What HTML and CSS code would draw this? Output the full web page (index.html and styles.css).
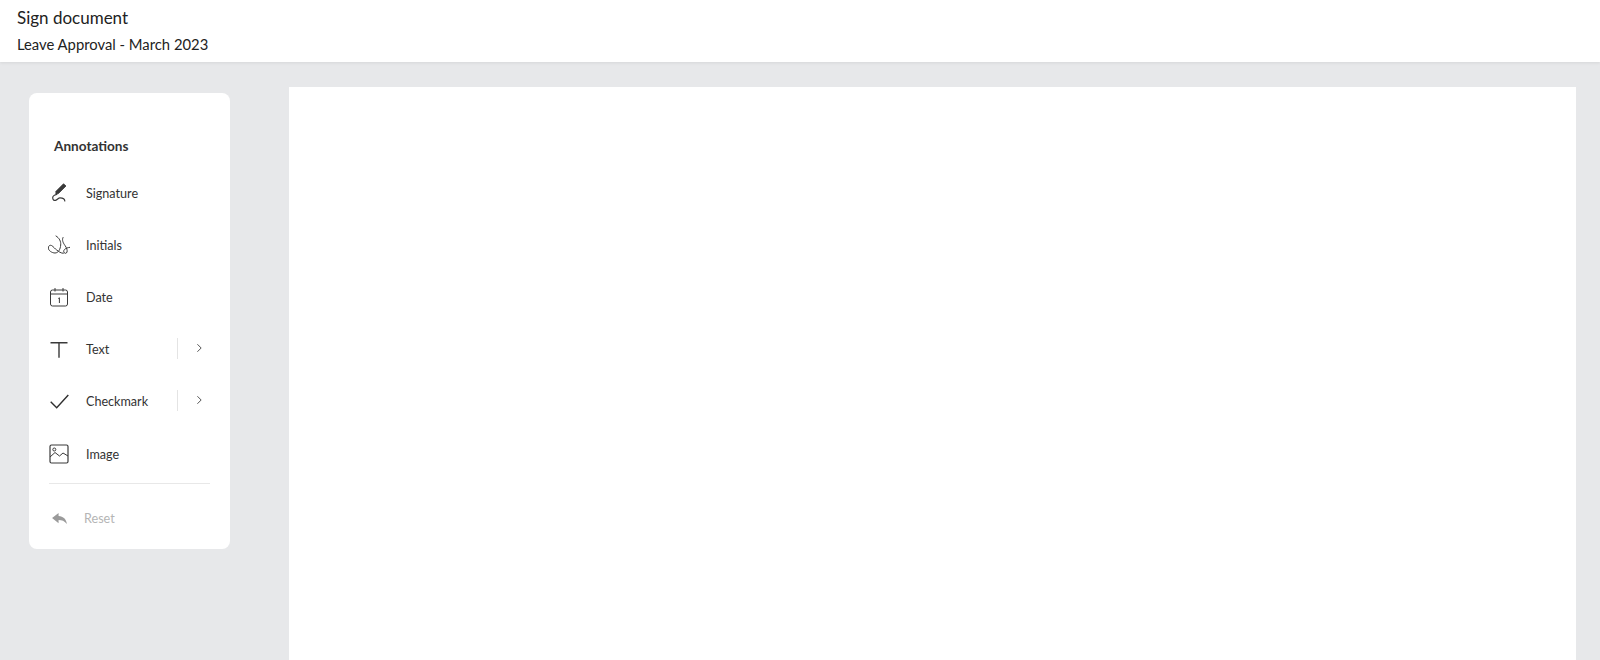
FILE: index.html
```html
<!DOCTYPE html>
<html lang="en">
<head>
    <meta charset="UTF-8">
    <title>Sign document</title>
    <link rel="stylesheet" href="styles.css">
</head>
<body>

<header class="topbar">
    <div class="topbar-title">Sign document</div>
    <div class="topbar-sub">Leave Approval - March 2023</div>
</header>

<main class="workspace">
    <aside class="panel">
        <h2 class="panel-title">Annotations</h2>

        <div class="tool">
            <svg class="tool-icon" viewBox="0 0 20 20" fill="none" stroke="#3a3a3a">
                <path d="M7 8.300 14.500 .8 17 3 9.500 10.500 6.800 11.300Z" fill="#3a3a3a" stroke-width=".8"/>
                <path d="M7.700 11.500C5.500 12 3.700 12.800 3.700 14.800 3.700 16.800 5 17.600 6.500 17.300 8.500 16.800 9.200 14.800 11 14.800 13 14.800 15.800 15.500 15.800 18" stroke-width="1.200" stroke-linecap="round"/>
            </svg>
            <span class="tool-label">Signature</span>
        </div>

        <div class="tool">
            <svg class="tool-icon" viewBox="0 0 22 20" fill="none" stroke="#3a3a3a" stroke-width="1" stroke-linecap="round">
                <path d="M8 1C11.500 3 13 6.500 12.700 10 12.400 14 10.500 18 7 18 4 18 .3 15.500 .3 13 .3 10.800 2 9.800 3.500 10.500 5.500 11.500 7 14 8.700 15 10.500 16.500 13 18.300 15.300 18.300"/>
                <path d="M15 2.500C13.500 5 15.500 8.500 17 10.500 18.800 13 19.500 15.500 19 17 18.500 18.800 16.300 18.800 15.800 17 15.300 15 17 13 22 12.300"/>
            </svg>
            <span class="tool-label">Initials</span>
        </div>

        <div class="tool">
            <svg class="tool-icon" viewBox="0 0 20 20" fill="none" stroke="#3a3a3a" stroke-width="1">
                <rect x="1.500" y="3" width="17" height="16" rx="2"/>
                <path d="M1.500 7H18.500M6 1V4.500M14 1V4.500"/>
                <path d="M9.300 11.500 10.400 10.800V16"/>
            </svg>
            <span class="tool-label">Date</span>
        </div>

        <div class="tool">
            <svg class="tool-icon" viewBox="0 0 20 20" fill="none" stroke="#3a3a3a" stroke-width="1.400">
                <path d="M1.500 2.700H18.500M10 2.700V17.800"/>
            </svg>
            <span class="tool-label">Text</span>
            <span class="tool-more">
                <svg class="chevron" viewBox="0 0 8 12" fill="none" stroke="#555" stroke-width="1.200">
                    <path d="M1.500 1.500 6 6 1.500 10.500"/>
                </svg>
            </span>
        </div>

        <div class="tool">
            <svg class="tool-icon" viewBox="0 0 20 20" fill="none" stroke="#2f2f2f" stroke-width="1.400">
                <path d="M1.700 9.700 7.700 15.700 19.300 3"/>
            </svg>
            <span class="tool-label">Checkmark</span>
            <span class="tool-more">
                <svg class="chevron" viewBox="0 0 8 12" fill="none" stroke="#555" stroke-width="1.200">
                    <path d="M1.500 1.500 6 6 1.500 10.500"/>
                </svg>
            </span>
        </div>

        <div class="tool">
            <svg class="tool-icon" viewBox="0 0 20 20" fill="none" stroke="#3a3a3a" stroke-width="1.200">
                <rect x="1" y="1" width="18" height="18" rx="1.500"/>
                <circle cx="5.300" cy="5.500" r="1.500" stroke-width="1"/>
                <path d="M1 13 6 8.500 10.500 12 14 9 19 12" stroke-width="1"/>
            </svg>
            <span class="tool-label">Image</span>
        </div>

        <hr class="panel-rule">

        <div class="reset">
            <svg class="reset-icon" viewBox="0 0 18 14" fill="#9a9a9a">
                <path d="M8 1 1 6.500 8 12V8.500C11.500 8.500 14.500 9.500 17 13 16.500 8 13 4.500 8 4.300Z"/>
            </svg>
            <span class="reset-label">Reset</span>
        </div>
    </aside>

    <section class="sheet"></section>
</main>

</body>
</html>
```

FILE: styles.css
```css
html, body {
    height: 100%;
}
body {
    margin: 0;
    font-family: Lato, "Open Sans", sans-serif;
    background-color: #e7e8ea;
    color: #2e2e2e;
    display: flex;
    flex-direction: column;
    overflow: hidden;
}
.topbar {
    flex: none;
    height: 62px;
    box-sizing: border-box;
    padding: 8px 17px 0;
    background-color: #fff;
    box-shadow: 0 1px 3px rgba(0, 0, 0, 0.08);
    position: relative;
}
.topbar-title {
    font-size: 17px;
    line-height: 20px;
    color: #222;
}
.topbar-sub {
    margin-top: 7px;
    font-size: 14.8px;
    line-height: 18px;
    color: #222;
}
.workspace {
    flex: 1;
    display: flex;
    align-items: flex-start;
    gap: 59px;
    padding: 25px 24px 0 29px;
    min-height: 0;
}
.panel {
    flex: none;
    width: 201px;
    height: 456px;
    box-sizing: border-box;
    margin-top: 6px;
    padding: 44px 20px 0 19px;
    background-color: #fff;
    border-radius: 8px;
}
.panel-title {
    margin: 0 0 12px 6px;
    font-size: 13.6px;
    line-height: 18px;
    font-weight: 700;
    color: #333;
}
.tool {
    height: 52.2px;
    display: flex;
    align-items: center;
    font-size: 12.6px;
    color: #333;
}
.tool-icon {
    flex: none;
    width: 22px;
    height: 20px;
    margin-right: 16px;
}
.tool-label {
    flex: 1;
}
.tool-more {
    flex: none;
    width: 33px;
    height: 21px;
    box-sizing: border-box;
    padding-left: 18px;
    display: flex;
    align-items: center;
    border-left: 1px solid #e4e4e4;
    margin-top: -3px;
}
.chevron {
    width: 7px;
    height: 10px;
}
.panel-rule {
    margin: 3px 0 0 1px;
    border: none;
    border-top: 1px solid #e8e8e8;
}
.reset {
    height: 68px;
    display: flex;
    align-items: center;
    padding-left: 3px;
    font-size: 12.6px;
    color: #b5b5b5;
}
.reset-icon {
    flex: none;
    width: 17px;
    height: 13px;
    margin-right: 16px;
}
.sheet {
    flex: 1;
    align-self: stretch;
    background-color: #fff;
}
```
